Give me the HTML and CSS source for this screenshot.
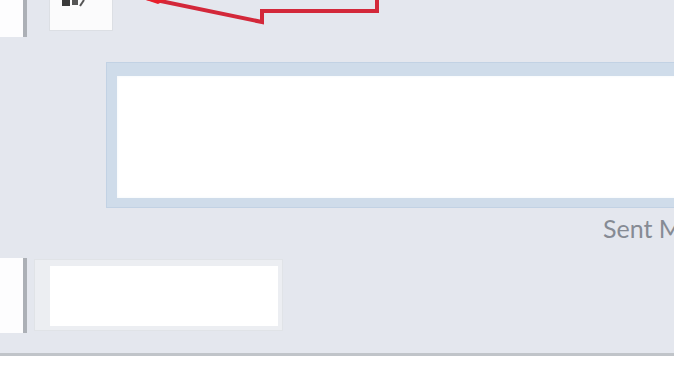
FILE: index.html
```html
<!DOCTYPE html>
<html>
<head>
<meta charset="utf-8">
<link rel="stylesheet" href="styles.css">
</head>
<body>
<div class="page">
  <div class="top-row">
    <div class="stub stub-top"></div>
    <div class="tool-btn">
      <svg class="tool-icon" width="24" height="8" viewBox="0 0 24 8">
        <rect x="0" y="0" width="8" height="6" fill="#3a3a3a"/>
        <rect x="10" y="0" width="6" height="5" fill="#555"/>
        <path d="M18 6 L22 0" stroke="#555" stroke-width="2"/>
      </svg>
    </div>
  </div>

  <div class="compose">
    <div class="compose-inner"></div>
  </div>

  <div class="sent-label">Sent Messages</div>

  <div class="bottom-row">
    <div class="stub stub-bottom"></div>
    <div class="field">
      <div class="field-inner"></div>
    </div>
  </div>

  <div class="footer"></div>

  <svg class="annotation" width="674" height="40" viewBox="0 0 674 40">
    <polyline points="146,-2 262,22 262,11 377,11 377,-2" fill="none" stroke="#d3283a" stroke-width="4" stroke-linejoin="miter"/>
    <path d="M146,0 L166,0 L158,4 Z" fill="#e8202c"/>
  </svg>
</div>
</body>
</html>
```

FILE: styles.css
```css
* { box-sizing: border-box; }
html, body {
  margin: 0;
  padding: 0;
  width: 674px;
  height: 385px;
  overflow: hidden;
  font-family: Lato, "Open Sans", sans-serif;
}
.page {
  position: relative;
  width: 674px;
  height: 385px;
  background: #e4e7ee;
  display: flex;
  flex-direction: column;
  overflow: hidden;
}
.top-row {
  display: flex;
  align-items: flex-start;
  height: 62px;
  gap: 22px;
}
.stub {
  width: 27px;
  background: #fdfdfe;
  border-right: 4px solid #acb0b6;
}
.stub-top {
  height: 37px;
}
.tool-btn {
  width: 64px;
  height: 31px;
  background: #fbfbfc;
  border: 1px solid #dcdfe4;
  border-top: none;
  padding-left: 12px;
}
.tool-icon {
  display: block;
}
.compose {
  margin-left: 106px;
  width: 580px;
  height: 146px;
  background: #cfdcea;
  border: 1px solid #c2d2e4;
  border-right: none;
  padding: 13px 0 9px 10px;
}
.compose-inner {
  height: 100%;
  background: #ffffff;
  box-shadow: inset 0 0 3px #f1f5f9;
}
.sent-label {
  margin-left: 603px;
  margin-top: 3px;
  white-space: nowrap;
  font-size: 25px;
  line-height: 34px;
  color: #868b94;
  height: 47px;
}
.bottom-row {
  display: flex;
  align-items: flex-start;
  gap: 7px;
  height: 95px;
}
.stub-bottom {
  height: 75px;
}
.field {
  margin-top: 1px;
  width: 249px;
  height: 72px;
  background: #eceef2;
  border: 1px solid #e0e3e7;
  padding: 6px 4px 4px 15px;
}
.field-inner {
  height: 100%;
  background: #ffffff;
}
.footer {
  flex: 1;
  background: #ffffff;
  border-top: 3px solid #c0c4c9;
}
.annotation {
  position: absolute;
  left: 0;
  top: 0;
}
```
